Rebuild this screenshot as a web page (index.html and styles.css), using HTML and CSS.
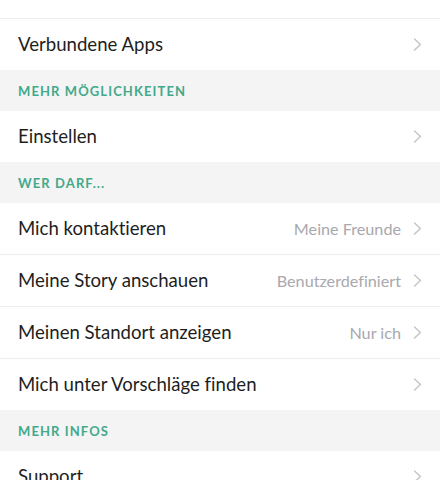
FILE: index.html
```html
<!DOCTYPE html>
<html lang="de">
<head>
<meta charset="utf-8">
<link rel="stylesheet" href="styles.css">
</head>
<body>
<div class="list">
  <div class="row top"></div>
  <div class="row"><span class="label">Verbundene Apps</span><span class="chev"><svg viewBox="0 0 8 13"><path d="M1 1l6 5.5L1 12"/></svg></span></div>
  <div class="header">MEHR MÖGLICHKEITEN</div>
  <div class="row"><span class="label">Einstellen</span><span class="chev"><svg viewBox="0 0 8 13"><path d="M1 1l6 5.5L1 12"/></svg></span></div>
  <div class="header">WER DARF...</div>
  <div class="row line"><span class="label">Mich kontaktieren</span><span class="value">Meine Freunde</span><span class="chev"><svg viewBox="0 0 8 13"><path d="M1 1l6 5.5L1 12"/></svg></span></div>
  <div class="row line"><span class="label">Meine Story anschauen</span><span class="value">Benutzerdefiniert</span><span class="chev"><svg viewBox="0 0 8 13"><path d="M1 1l6 5.5L1 12"/></svg></span></div>
  <div class="row line"><span class="label">Meinen Standort anzeigen</span><span class="value">Nur ich</span><span class="chev"><svg viewBox="0 0 8 13"><path d="M1 1l6 5.5L1 12"/></svg></span></div>
  <div class="row"><span class="label">Mich unter Vorschläge finden</span><span class="chev"><svg viewBox="0 0 8 13"><path d="M1 1l6 5.5L1 12"/></svg></span></div>
  <div class="header">MEHR INFOS</div>
  <div class="row"><span class="label">Support</span><span class="chev"><svg viewBox="0 0 8 13"><path d="M1 1l6 5.5L1 12"/></svg></span></div>
</div>
</body>
</html>
```

FILE: styles.css
```css
html, body {
  margin: 0;
  padding: 0;
  background: #ffffff;
  overflow: hidden;
}
body {
  font-family: "Lato", "Noto Sans", sans-serif;
  font-variant-ligatures: none;
  width: 440px;
  height: 480px;
}
.list {
  display: flex;
  flex-direction: column;
}
.row {
  display: flex;
  align-items: center;
  height: 51px;
  flex: none;
  padding: 0 18px;
  background: #ffffff;
  box-sizing: content-box;
}
.row.top {
  height: 18px;
  border-bottom: 1px solid #ececec;
}
.row.line {
  border-bottom: 1px solid #ececec;
}
.label {
  flex: 1;
  font-size: 18.6px;
  color: #1e1e1e;
  white-space: nowrap;
  margin-top: -1px;
}
.value {
  font-size: 16.2px;
  color: #a8a8ad;
  margin-right: 12px;
  white-space: nowrap;
  margin-top: -1px;
}
.chev {
  display: flex;
  width: 9px;
  height: 13px;
}
.chev svg {
  width: 9px;
  height: 13px;
  fill: none;
  stroke: #c4c4c8;
  stroke-width: 1.4;
  stroke-linecap: round;
  stroke-linejoin: round;
}
.header {
  display: flex;
  align-items: center;
  height: 41px;
  flex: none;
  padding: 1px 18px 0;
  box-sizing: border-box;
  background: #f4f4f4;
  color: #43a98b;
  font-size: 13px;
  font-weight: 700;
  letter-spacing: 1.1px;
}
```
